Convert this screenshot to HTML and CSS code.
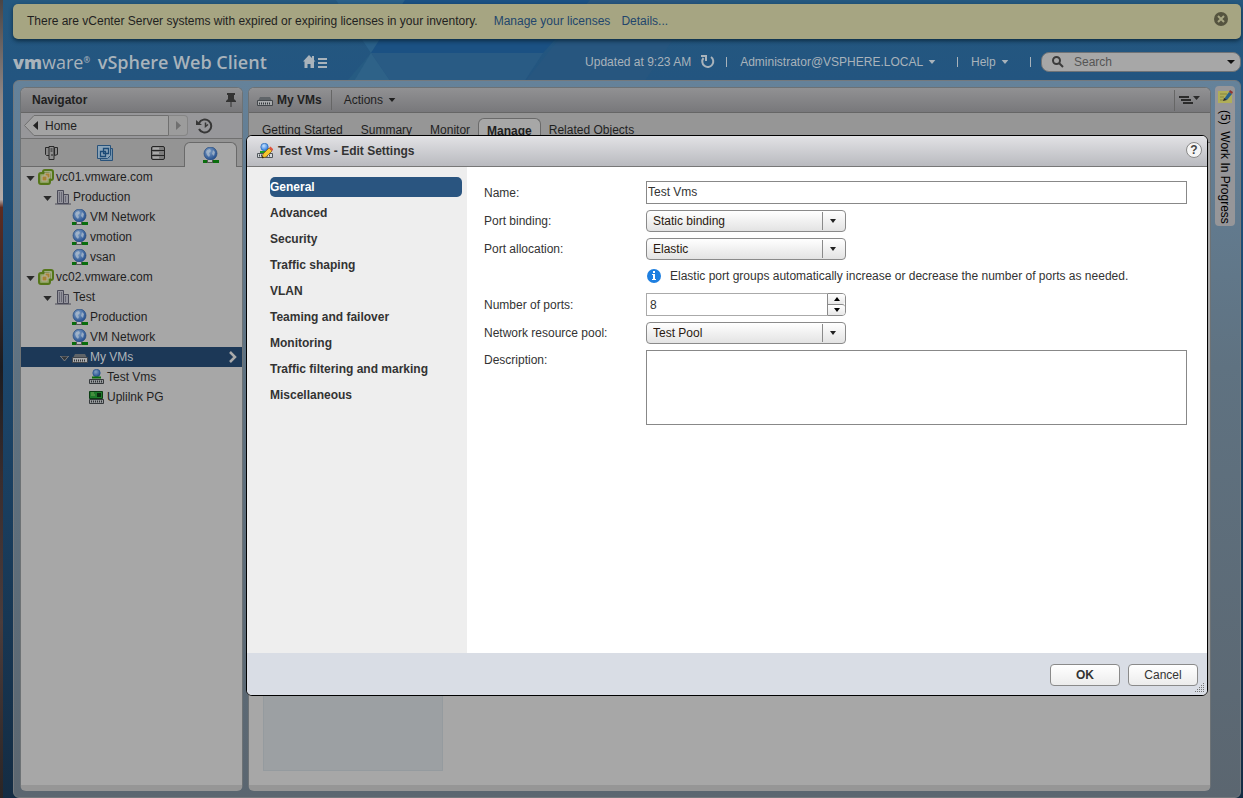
FILE: index.html
```html
<!DOCTYPE html>
<html lang="en">
<head>
    <meta charset="UTF-8">
    <meta name="viewport" content="width=device-width, initial-scale=1.0">
    <title>vSphere Web Client</title>
    <link rel="stylesheet" href="styles.css">
</head>
<body>
    <!-- Shared icons -->
    <svg class="sprite" aria-hidden="true">
        <defs>
            <radialGradient id="ball" cx="0.4" cy="0.35" r="0.7">
                <stop offset="0" stop-color="#7f9fc4"/>
                <stop offset="1" stop-color="#1f4a8c"/>
            </radialGradient>
            <radialGradient id="ball-lit" cx="0.4" cy="0.35" r="0.7">
                <stop offset="0" stop-color="#c5e2ff"/>
                <stop offset="1" stop-color="#2272d8"/>
            </radialGradient>
        </defs>
        <symbol id="i-caret" viewBox="0 0 10 6"><path d="M0 0h10L5 6z"/></symbol>
        <symbol id="i-vcenter" viewBox="0 0 16 16">
            <rect x="5" y="1" width="10" height="10" rx="2" fill="#9fab86" stroke="#55761a" stroke-width="2"/>
            <rect x="1" y="4" width="11" height="11" rx="2" fill="#8b9f5c" stroke="#55761a" stroke-width="2"/>
            <rect x="7" y="4" width="5" height="5" fill="#a78434" stroke="#b5b09c"/>
            <rect x="4" y="7" width="5" height="5" fill="#a78434" stroke="#b5b09c"/>
        </symbol>
        <symbol id="i-datacenter" viewBox="0 0 16 16">
            <path d="M2.500 14.500v-13h6v13zM8.500 14.500v-9h5v9z" fill="#93939c" stroke="#4b4b58"/>
            <path d="M4 4h3M4 6h3M4 8h3M4 10h3M4 12h3M10 8h2M10 10h2M10 12h2" stroke="#3f3f4c" stroke-dasharray="1 1"/>
            <path d="M0 15h16" stroke="#4b4b58"/>
        </symbol>
        <symbol id="i-network" viewBox="0 0 16 16">
            <circle cx="7.500" cy="6.500" r="6.500" fill="url(#ball)" stroke="#2b4f80" stroke-width=".7"/>
            <path d="M4 3l3-1 1 2-2 2 1 2-1 2-2-2-1-3zM10 3l2 2-1 4-2-2z" fill="#b3c1cf" opacity=".7"/>
            <path d="M0 13h16v3H0z" fill="#0a6d0d"/>
            <path d="M4 13h6v3H4z" fill="#555"/>
            <path d="M5 13h4v2H5z" fill="#bbb"/>
        </symbol>
        <symbol id="i-switch" viewBox="0 0 16 16">
            <path d="M1 9l2-4h10l2 4z" fill="#5f6468"/>
            <path d="M.5 8.500h15v5H.5z" fill="#a9abad" stroke="#43474b"/>
            <path d="M2 11.500h12" stroke="#33373b" stroke-width="2" stroke-dasharray="1 1"/>
        </symbol>
        <symbol id="i-portgroup" viewBox="0 0 16 16">
            <circle cx="7.500" cy="4" r="3.700" fill="url(#ball)" stroke="#24508c" stroke-width=".7"/>
            <path d="M3 8.500h9" stroke="#0a6d0d" stroke-width="2"/>
            <path d="M.5 10.500h14v4h-14z" fill="#999c9e" stroke="#35393c"/>
            <path d="M2 12.500h12" stroke="#2d3134" stroke-width="2" stroke-dasharray="1 1"/>
        </symbol>
        <symbol id="i-uplink" viewBox="0 0 16 16">
            <path d="M.5 2.500h13v7H.5z" fill="#1d7a2a" stroke="#0b3d12"/>
            <path d="M8 4h4v4H8z" fill="#0c2c10"/>
            <path d="M2 4h3M2 6h4" stroke="#6fa052"/>
            <path d="M.5 10.500h14v4h-14z" fill="#999c9e" stroke="#35393c"/>
            <path d="M2 12.500h12" stroke="#2d3134" stroke-width="2" stroke-dasharray="1 1"/>
        </symbol>
    </svg>

    <div class="page">
        <svg class="facets" width="700" height="88" viewBox="0 0 700 88" aria-hidden="true">
            <path d="M336 0h70L351 88h-10L371 53z" fill="#265b82"/>
            <path d="M336 0h69L371 53z" fill="#2a6089"/>
            <path d="M405 0h185L543 53H371z" fill="#1b5183"/>
            <path d="M371 53h172L520 88H395z" fill="#295b84"/>
            <path d="M371 53L395 88H350z" fill="#2e6288"/>
            <path d="M590 0h110L640 88H520z" fill="#27567f"/>
        </svg>

        <div class="notice">
            <span>There are vCenter Server systems with expired or expiring licenses in your inventory.</span>
            <a href="#">Manage your licenses</a>
            <a href="#">Details...</a>
            <button class="notice-close" type="button" aria-label="Close">
                <svg width="16" height="16" viewBox="0 0 16 16"><circle cx="8" cy="8" r="7" fill="#55543f"/><path d="M5 5l6 6M11 5l-6 6" stroke="#a6a582" stroke-width="2"/></svg>
            </button>
        </div>

        <header class="topbar">
            <div class="brand"><b>vm</b><span class="brand-light">ware</span><sup>&reg;</sup> <span class="product">vSphere Web Client</span></div>
            <button class="home" type="button" aria-label="Home">
                <svg width="24" height="14" viewBox="0 0 24 14" fill="#a9b3bb"><path d="M6 0l6.500 6.500H11V13H7.500V9h-3v4H1.500V6.500H0zM9 1h2v4H9z"/><path d="M15 3h9v2h-9zM15 7h9v2h-9zM15 11h9v2h-9z"/></svg>
            </button>
            <div class="session">
                <span>Updated at 9:23 AM</span>
                <button class="refresh" type="button" aria-label="Refresh">
                    <svg width="14" height="14" viewBox="0 0 14 14" fill="none" stroke="#a9b3bb" stroke-width="2"><path d="M10 2a5.500 5.500 0 1 1-7.500 1"/><path d="M0 1h5v5"/></svg>
                </button>
                <i class="bar"></i>
                <button class="user" type="button">Administrator@VSPHERE.LOCAL <svg class="caret" width="8" height="4"><use href="#i-caret"/></svg></button>
                <i class="bar"></i>
                <button class="help" type="button">Help <svg class="caret" width="8" height="4"><use href="#i-caret"/></svg></button>
                <i class="bar"></i>
            </div>
            <div class="search">
                <svg width="12" height="12" viewBox="0 0 12 12" fill="none" stroke="#3b3b3b" stroke-width="2"><circle cx="4.500" cy="4.500" r="3.500"/><path d="M7 7l4 4"/></svg>
                <input type="text" placeholder="Search" aria-label="Search">
                <svg width="8" height="4" viewBox="0 0 8 4"><path d="M0 0h8L4 4z" fill="#111"/></svg>
            </div>
        </header>

        <div class="shell">
            <aside class="panel navigator">
                <div class="panel-head">
                    <span class="panel-title">Navigator</span>
                    <svg class="pin" width="10" height="14" viewBox="0 0 10 14" fill="#333"><path d="M1 0h8v2H8v4l2 2v1H0V8l2-2V2H1z"/><path d="M4.500 9h1v5h-1z"/></svg>
                </div>
                <div class="history">
                    <button class="back" type="button" aria-label="Back to Home">
                        <svg width="145" height="21" viewBox="0 0 145 21"><path d="M.5 10.500L10 .5h134.500v20H10z" fill="#a3a3a3" stroke="#707070"/><path d="M14 6v9l-5-4.500z" fill="#222"/></svg>
                        <span>Home</span>
                    </button>
                    <button class="forward" type="button" aria-label="Forward"><svg width="5" height="9" viewBox="0 0 5 9"><path d="M0 0l5 4.500L0 9z" fill="#707070"/></svg></button>
                    <button class="recent" type="button" aria-label="Recent objects">
                        <svg width="17" height="16" viewBox="0 0 17 16" fill="none" stroke="#373737" stroke-width="2"><path d="M3 5a6.500 6.500 0 1 1 0 6"/><path d="M9.500 4.500v4l2.500-2" stroke-width="1.500"/><path d="M0 2v5h6z" fill="#373737" stroke="none"/></svg>
                    </button>
                </div>
                <div class="inventory-tabs">
                    <button type="button" aria-label="Hosts and Clusters"><svg width="16" height="16" viewBox="0 0 16 16"><path d="M1.500 2.500h4v8h-3l-1-1zM10.500 2.500h3v7l-3 1z" fill="#898989" stroke="#292929"/><path d="M5 1.500h5v13H5z" fill="#8f8f8f" stroke="#292929"/><path d="M6.500 4h2M6.500 6h2M7 10h2" stroke="#222"/></svg></button>
                    <button type="button" aria-label="VMs and Templates"><svg width="16" height="16" viewBox="0 0 16 16"><path d="M3.500 3.500h12v12h-12z" fill="#7492ab" stroke="#28527a"/><path d="M.5 .5h13v10l-3 3H.5z" fill="#8ca5b9" stroke="#28527a"/><path d="M6.500 3.500h5v5h-5zM3.500 6.500h5v5h-5z" fill="none" stroke="#1c4b77" stroke-width="1.300"/></svg></button>
                    <button type="button" aria-label="Storage"><svg width="16" height="16" viewBox="0 0 16 16"><rect x="1.500" y="1.500" width="13" height="13" rx="1.500" fill="#7d7d7d" stroke="#262626"/><path d="M1 5.500h14M1 10.500h14" stroke="#262626"/><path d="M3 3.500h6M3 8h6M3 12.500h6" stroke="#a9a9a9" stroke-width="2"/></svg></button>
                    <button class="active" type="button" aria-label="Networking"><svg width="16" height="16"><use href="#i-network"/></svg></button>
                </div>
                <ul class="tree">
                    <li class="l1"><svg class="twist" width="9" height="5"><use href="#i-caret"/></svg><svg width="16" height="16"><use href="#i-vcenter"/></svg><a href="#">vc01.vmware.com</a></li>
                    <li class="l2"><svg class="twist" width="9" height="5"><use href="#i-caret"/></svg><svg width="16" height="16"><use href="#i-datacenter"/></svg><a href="#">Production</a></li>
                    <li class="l3 leaf"><svg width="16" height="16"><use href="#i-network"/></svg><a href="#">VM Network</a></li>
                    <li class="l3 leaf"><svg width="16" height="16"><use href="#i-network"/></svg><a href="#">vmotion</a></li>
                    <li class="l3 leaf"><svg width="16" height="16"><use href="#i-network"/></svg><a href="#">vsan</a></li>
                    <li class="l1"><svg class="twist" width="9" height="5"><use href="#i-caret"/></svg><svg width="16" height="16"><use href="#i-vcenter"/></svg><a href="#">vc02.vmware.com</a></li>
                    <li class="l2"><svg class="twist" width="9" height="5"><use href="#i-caret"/></svg><svg width="16" height="16"><use href="#i-datacenter"/></svg><a href="#">Test</a></li>
                    <li class="l3 leaf"><svg width="16" height="16"><use href="#i-network"/></svg><a href="#">Production</a></li>
                    <li class="l3 leaf"><svg width="16" height="16"><use href="#i-network"/></svg><a href="#">VM Network</a></li>
                    <li class="l3 selected"><svg class="twist" width="9" height="5"><use href="#i-caret"/></svg><svg width="16" height="16"><use href="#i-switch"/></svg><a href="#">My VMs</a><svg class="go" width="8" height="12" viewBox="0 0 8 12"><path d="M1 1l5 5-5 5" fill="none" stroke="#aaa" stroke-width="2.500"/></svg></li>
                    <li class="l4 leaf"><svg width="16" height="16"><use href="#i-portgroup"/></svg><a href="#">Test Vms</a></li>
                    <li class="l4 leaf"><svg width="16" height="16"><use href="#i-uplink"/></svg><a href="#">Uplilnk PG</a></li>
                </ul>
            </aside>

            <main class="panel content">
                <div class="panel-head">
                    <svg width="16" height="16"><use href="#i-switch"/></svg>
                    <span class="object-name">My VMs</span>
                    <button class="actions" type="button">Actions <svg class="caret" width="8" height="4"><use href="#i-caret"/></svg></button>
                    <button class="layout-menu" type="button" aria-label="Layout"><svg width="22" height="10" viewBox="0 0 22 10" fill="#2b2b2b"><path d="M0 1h10v2H0zM2 4h10v2H2zM4 7h10v2H4zM14 1h7l-3.500 4z"/></svg></button>
                </div>
                <nav class="tabs">
                    <a href="#">Getting Started</a>
                    <a href="#">Summary</a>
                    <a href="#">Monitor</a>
                    <a class="active" href="#">Manage</a>
                    <a href="#">Related Objects</a>
                </nav>
                <div class="content-body"><div class="side-list"></div></div>
            </main>

            <button class="wip" type="button">
                <svg width="16" height="16" viewBox="0 0 16 16"><path d="M1 2h14v12H1z" fill="#b0ae58"/><path d="M3 5h7M3 8h4M3 11h3" stroke="#86853f"/><path d="M7 10l5-7 3 2-5 6z" fill="#27608b"/><path d="M12 3l1-2 3 2-1 2z" fill="#8e3433"/><path d="M6 12l1-3 3 2z" fill="#2a2a2a"/></svg>
                <span>(5)&nbsp; Work In Progress</span>
            </button>
        </div>
    </div>

    <form class="dialog" role="dialog" aria-labelledby="dialog-title">
        <div class="dialog-head">
            <svg width="16" height="16" viewBox="0 0 16 16"><circle cx="7.500" cy="4" r="3.700" fill="url(#ball-lit)" stroke="#2468b8" stroke-width=".7"/><path d="M3 9h9" stroke="#1b9a26" stroke-width="2"/><path d="M.5 10.500h15v4H.5z" fill="#d5d9dc" stroke="#50565b"/><path d="M2 12.500h12" stroke="#41474b" stroke-width="2" stroke-dasharray="1 1"/><path d="M5 15l1-4 6-6 3 3-6 6z" fill="#f7c62c" stroke="#7a4e10" stroke-width=".7"/><path d="M12 5l1.500-1.500 3 3L15 8z" fill="#e0523c"/><path d="M5 15l.5-2L7 14.500z" fill="#111"/></svg>
            <h1 id="dialog-title">Test Vms - Edit Settings</h1>
            <button class="dialog-help" type="button" aria-label="Help">?</button>
        </div>
        <div class="dialog-body">
            <nav class="pages">
                <a class="active" href="#">General</a>
                <a href="#">Advanced</a>
                <a href="#">Security</a>
                <a href="#">Traffic shaping</a>
                <a href="#">VLAN</a>
                <a href="#">Teaming and failover</a>
                <a href="#">Monitoring</a>
                <a href="#">Traffic filtering and marking</a>
                <a href="#">Miscellaneous</a>
            </nav>
            <div class="fields">
                <label for="name">Name:</label>
                <input class="text" id="name" type="text" value="Test Vms">

                <label for="binding">Port binding:</label>
                <div class="select"><select id="binding"><option>Static binding</option></select></div>

                <label for="allocation">Port allocation:</label>
                <div class="select"><select id="allocation"><option>Elastic</option></select></div>

                <p class="hint">
                    <svg width="16" height="16" viewBox="0 0 16 16"><circle cx="8" cy="8" r="7" fill="#1e7fe0"/><path d="M7 3h2v2H7zM6 6h3v5h1v1H6v-1h1V7H6z" fill="#fff"/></svg>
                    Elastic port groups automatically increase or decrease the number of ports as needed.
                </p>

                <label for="ports">Number of ports:</label>
                <div class="stepper">
                    <input id="ports" type="text" inputmode="numeric" value="8">
                    <div class="steps">
                        <button type="button" aria-label="More"><svg width="6" height="4" viewBox="0 0 6 4"><path d="M0 4h6L3 0z"/></svg></button>
                        <button type="button" aria-label="Fewer"><svg width="6" height="4" viewBox="0 0 6 4"><path d="M0 0h6L3 4z"/></svg></button>
                    </div>
                </div>

                <label for="pool">Network resource pool:</label>
                <div class="select"><select id="pool"><option>Test Pool</option></select></div>

                <label class="top" for="description">Description:</label>
                <textarea id="description"></textarea>
            </div>
        </div>
        <div class="dialog-foot">
            <button class="btn primary" type="submit">OK</button>
            <button class="btn" type="button">Cancel</button>
            <svg class="grip" width="10" height="10" viewBox="0 0 10 10" stroke="#777" stroke-dasharray="1 1"><path d="M8 .5h2M6 2.500h4M4 4.500h6M2 6.500h8M0 8.500h10"/></svg>
        </div>
    </form>
</body>
</html>
```

FILE: styles.css
```css
* {
    margin: 0;
    padding: 0;
    box-sizing: border-box;
}

body {
    height: 100vh;
    overflow: hidden;
    background: linear-gradient(#4a4545, #8d8583 12%, #b5adaa 25%, #5e2b20 26%, #3c2b2b 35%, #1c1c20 46%, #3a2d2e 60%, #4b3c3b 78%, #2b2525);
    color: #1f1f1f;
    font: 12px/20px "Liberation Sans", Arial, sans-serif;
    padding-left: 3px;
}

button,
input,
select,
textarea {
    font: inherit;
    color: inherit;
}

button {
    background: none;
    border: none;
}

a {
    color: inherit;
    text-decoration: none;
}

svg {
    display: block;
    flex: none;
}

.sprite {
    position: absolute;
    width: 0;
    height: 0;
}

.page {
    position: relative;
    display: flex;
    flex-direction: column;
    height: 100%;
    padding: 4px 2px 0 10px;
    background: linear-gradient(#24587f, #235580 10%, #1b4468 50%, #142c43);
}

/* Pattern behind the header */
.facets {
    position: absolute;
    top: 0;
    left: -3px;
}

.notice {
    position: relative;
    display: flex;
    align-items: center;
    gap: 11px;
    height: 35px;
    flex: none;
    padding: 0 12px 2px 14px;
    background: #a6a582;
    border-radius: 5px;
    box-shadow: 0 2px 4px #0d2c43;
}

.notice a {
    color: #22456c;
}

.notice a:first-of-type {
    margin-left: 5px;
}

.notice-close {
    margin-left: auto;
    padding-bottom: 4px;
}

.topbar {
    position: relative;
    display: flex;
    align-items: center;
    height: 41px;
    flex: none;
    padding-top: 5px;
    color: #a9b3bb;
}

.brand {
    width: 290px;
    font: 600 18px/24px "Open Sans", sans-serif;
    white-space: nowrap;
}

.brand b {
    font-weight: 800;
}

.brand-light {
    font-weight: 400;
}

.brand sup {
    font-size: 8px;
    line-height: 8px;
    vertical-align: 6px;
}

.product {
    margin-left: 3px;
}

.session {
    display: flex;
    align-items: center;
    margin-left: auto;
}

.bar {
    width: 1px;
    height: 10px;
    background: #a9b3bb;
}

.caret {
    display: inline-block;
    fill: currentColor;
    vertical-align: 2px;
    margin-left: 2px;
}

.refresh {
    margin: 0 11px 0 10px;
}

.user,
.help {
    margin: 0 21px 0 13px;
}

.search {
    display: flex;
    align-items: center;
    gap: 10px;
    width: 200px;
    height: 20px;
    margin-left: 10px;
    padding: 0 5px 0 10px;
    background: #a7a7a7;
    border: 1px solid #6f7377;
    border-radius: 8px;
}

.search input {
    flex: 1;
    min-width: 0;
    background: none;
    border: none;
}

.search input::placeholder {
    color: #555;
}

.shell {
    position: relative;
    display: flex;
    flex: 1;
    min-height: 0;
    padding: 6px 5px 6px 6px;
    background: linear-gradient(#65829a, #5f7281 40%, #5b6670);
    border: 1px solid #74797d;
    border-radius: 6px;
}

.panel {
    display: flex;
    flex-direction: column;
    background: #a7a7a7;
    border: 1px solid #6d7275;
    border-bottom: 6px solid #969696;
    border-radius: 6px;
    overflow: hidden;
}

.panel-head {
    display: flex;
    align-items: center;
    height: 25px;
    flex: none;
    background: linear-gradient(#919193, #78787b);
    border-bottom: 1px solid #666;
}

.navigator {
    width: 223px;
    flex: none;
}

.panel-title {
    padding-left: 11px;
    font-weight: bold;
}

.pin {
    margin: 0 6px 0 auto;
}

.history {
    display: flex;
    align-items: center;
    height: 26px;
    flex: none;
    padding-left: 3px;
    background: #97979a;
    border-bottom: 1px solid #707070;
}

.back {
    display: grid;
    align-items: center;
    text-align: left;
}

.back > * {
    grid-area: 1 / 1;
}

.back span {
    padding-left: 21px;
}

.forward {
    width: 19px;
    height: 21px;
    padding-left: 7px;
    background: #9c9c9c;
    border: 1px solid #858585;
    border-left: none;
    border-radius: 0 4px 4px 0;
}

.recent {
    margin-left: 8px;
}

.inventory-tabs {
    display: grid;
    grid-template-columns: repeat(4, 53px);
    height: 28px;
    flex: none;
    padding-left: 4px;
    background: #949494;
    box-shadow: inset 0 -1px #6a6a6a;
}

.inventory-tabs button {
    display: flex;
    align-items: center;
    justify-content: center;
}

.inventory-tabs .active {
    margin-top: 3px;
    background: #a7a7a7;
    border: 1px solid #6a6a6a;
    border-bottom: none;
    border-radius: 6px 6px 0 0;
}

.tree {
    list-style: none;
}

.tree li {
    display: flex;
    align-items: center;
    height: 20px;
    gap: 2px;
}

.tree .twist {
    margin: 2px 1px 0 0;
    fill: #2a2a2a;
}

.tree .l1 {
    padding-left: 5px;
}

.tree .l2 {
    padding-left: 22px;
}

.tree .l3 {
    padding-left: 39px;
}

.tree .l3.leaf {
    padding-left: 51px;
}

.tree .l4.leaf {
    padding-left: 68px;
}

.tree .selected {
    background: #1c3857;
    color: #b0b5ba;
}

.tree .selected .twist {
    fill: #34383c;
    stroke: #8a8a8a;
}

.tree .go {
    margin: 0 5px 0 auto;
}

.content {
    flex: 1;
    min-width: 0;
    margin-left: 5px;
}

.content .panel-head {
    padding-left: 8px;
}

.object-name {
    padding: 0 9px 0 4px;
    border-right: 1px solid #666;
    font-weight: bold;
}

.actions {
    padding-left: 12px;
}

.layout-menu {
    height: 21px;
    margin-left: auto;
    padding: 0 9px 0 4px;
    border-left: 1px solid #666;
}

.tabs {
    display: flex;
    align-items: flex-end;
    height: 30px;
    flex: none;
    gap: 18px;
    padding-left: 13px;
    line-height: 23px;
    background: #969696;
    border-bottom: 1px solid #6a6a6a;
}

.tabs .active {
    margin: 0 -10px;
    padding: 1px 8px 0;
    background: #a7a7a7;
    border: 1px solid #6a6a6a;
    border-bottom: none;
    border-radius: 6px 6px 0 0;
    font-weight: bold;
    line-height: 22px;
}

.content-body {
    display: flex;
    flex: 1;
    padding: 14px;
}

.side-list {
    width: 180px;
    background: #9ca0a3;
    border: 1px solid #959b9f;
}

.wip {
    display: flex;
    flex-direction: column;
    align-items: center;
    align-self: flex-start;
    gap: 5px;
    width: 20px;
    height: 140px;
    margin: -1px 0 0 4px;
    padding-top: 3px;
    background: #969699;
    border-radius: 4px;
    color: #000;
    white-space: nowrap;
}

.wip span {
    writing-mode: vertical-rl;
}

/* Edit Settings dialog, floats over the page */
.dialog {
    position: absolute;
    inset: 135px 35px 102px 246px;
    display: flex;
    flex-direction: column;
    background: #fff;
    border: 1px solid #000;
    border-radius: 6px;
    overflow: hidden;
    color: #333;
}

.dialog-head {
    display: flex;
    align-items: center;
    gap: 5px;
    height: 31px;
    flex: none;
    padding: 0 5px 0 10px;
    background: linear-gradient(#e2e2e5, #b9babf);
    border-bottom: 1px solid #777;
}

.dialog-head h1 {
    font-size: 12px;
}

.dialog-help {
    width: 16px;
    height: 16px;
    margin: 0 0 2px auto;
    background: #f5f5f5;
    border: 1px solid #888;
    border-radius: 50%;
    color: #444;
    font-weight: bold;
    line-height: 14px;
}

.dialog-body {
    display: flex;
    flex: 1;
    min-height: 0;
}

.pages {
    display: flex;
    flex-direction: column;
    gap: 6px;
    width: 220px;
    flex: none;
    padding: 10px 5px 0 23px;
    background: #eee;
    font-weight: bold;
}

.pages a {
    border-radius: 5px;
}

.pages .active {
    background: #2a5580;
    color: #fff;
}

.fields {
    display: grid;
    grid-template-columns: 162px 1fr;
    align-content: start;
    align-items: center;
    gap: 6px 0;
    flex: 1;
    padding: 14px 20px 0 17px;
}

.fields .top {
    align-self: start;
}

.text,
.fields textarea {
    width: 100%;
    background: #fff;
    border: 1px solid #888;
}

.text {
    height: 23px;
    padding: 0 1px 2px;
}

.fields textarea {
    display: block;
    height: 75px;
    padding: 2px;
    resize: none;
}

.select {
    position: relative;
    width: 200px;
}

.select select {
    display: block;
    width: 100%;
    height: 22px;
    padding: 0 28px 0 6px;
    appearance: none;
    background: linear-gradient(#fff, #e3e3e3);
    border: 1px solid #8a8a8a;
    border-radius: 4px;
    color: #2a1a10;
}

/* Arrow cell at the right end of a drop-down */
.select::before {
    content: "";
    position: absolute;
    top: 2px;
    bottom: 2px;
    right: 23px;
    width: 1px;
    background: #8a8a8a;
}

.select::after {
    content: "";
    position: absolute;
    top: 9px;
    right: 10px;
    border: 3px solid transparent;
    border-top: 4px solid #222;
    border-bottom: none;
}

.hint {
    grid-column: 2;
    display: flex;
    align-items: center;
    gap: 8px;
    height: 21px;
    padding-bottom: 2px;
}

.stepper {
    display: flex;
    width: 200px;
    height: 23px;
}

.stepper input {
    flex: 1;
    min-width: 0;
    padding-left: 3px;
    border: 1px solid #aaa;
    border-right: none;
}

.steps {
    display: flex;
    flex-direction: column;
    width: 19px;
    border: 1px solid #8a8a8a;
    border-radius: 0 4px 4px 0;
}

.steps button {
    display: flex;
    align-items: center;
    justify-content: center;
    flex: 1;
    background: linear-gradient(#fff, #e8e8e8);
    border-radius: 0 3px 3px 0;
}

.steps button + button {
    border-top: 1px solid #8a8a8a;
}

.dialog-foot {
    position: relative;
    display: flex;
    align-items: center;
    justify-content: flex-end;
    gap: 8px;
    height: 42px;
    flex: none;
    padding: 2px 9px 0 0;
    background: #d9dde5;
}

.btn {
    width: 70px;
    height: 22px;
    background: linear-gradient(#fff, #ececec);
    border: 1px solid #8a8a8a;
    border-radius: 4px;
}

.primary {
    font-weight: bold;
}

.grip {
    position: absolute;
    right: 2px;
    bottom: 2px;
}
```
